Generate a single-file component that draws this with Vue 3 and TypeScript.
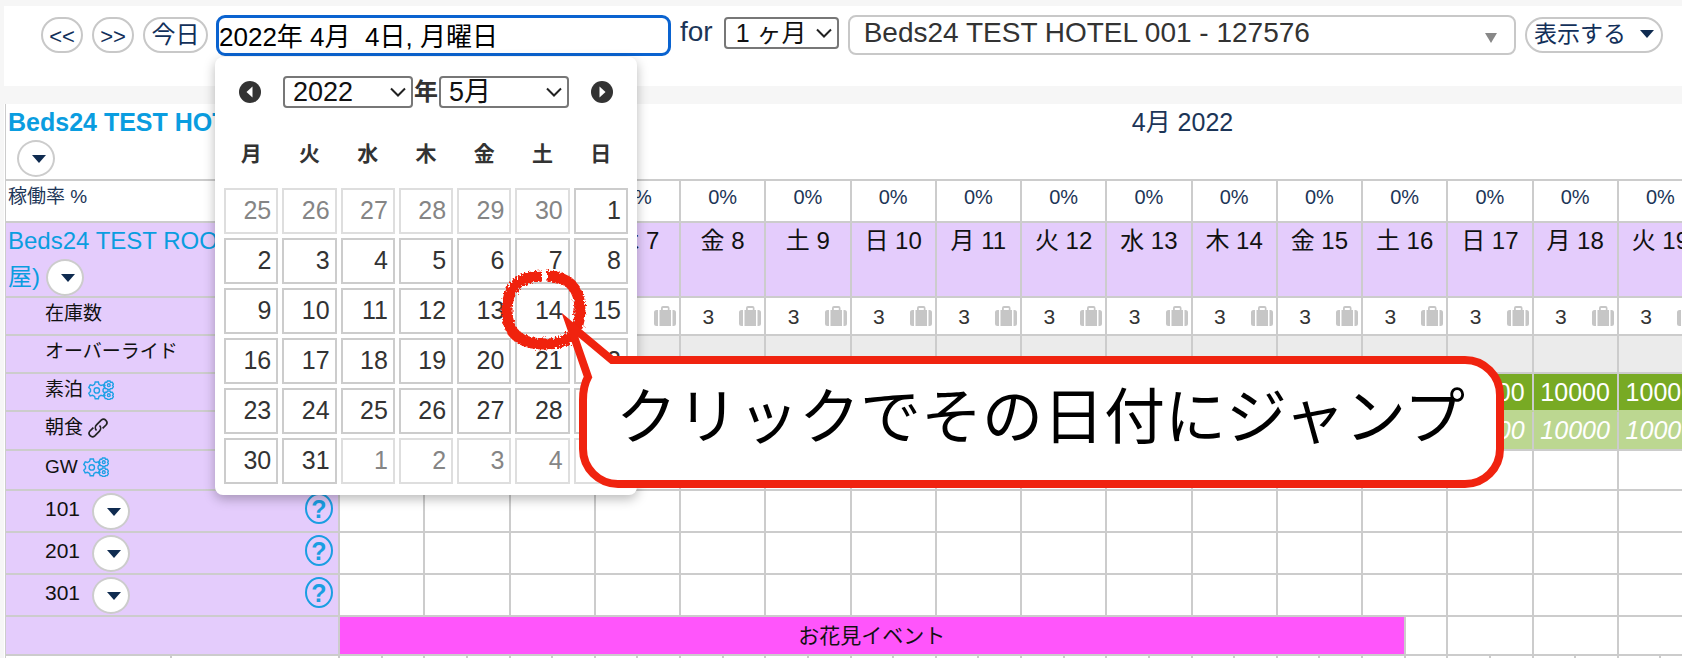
<script setup lang="ts">
import { ref } from 'vue'

type RowIcon = 'gears' | 'link' | null

const dateText = ref('2022年 4月  4日, 月曜日')

const days: string[] = [
  '月 4', '火 5', '水 6', '木 7', '金 8', '土 9', '日 10', '月 11',
  '火 12', '水 13', '木 14', '金 15', '土 16', '日 17', '月 18', '火 19',
]

const rateRows: { label: string; icon: RowIcon; cls: string; price: string }[] = [
  { label: 'オーバーライド', icon: null, cls: 'override', price: '' },
  { label: '素泊', icon: 'gears', cls: 'price', price: '10000' },
  { label: '朝食', icon: 'link', cls: 'price linked', price: '10000' },
  { label: 'GW', icon: 'gears', cls: 'empty', price: '' },
]

const rooms: string[] = ['101', '201', '301']

const weekdays: string[] = ['月', '火', '水', '木', '金', '土', '日']
const firstShown = new Date(2022, 3, 25)
const weeks = Array.from({ length: 6 }, (_, w) =>
  Array.from({ length: 7 }, (_, d) => {
    const date = new Date(firstShown)
    date.setDate(firstShown.getDate() + w * 7 + d)
    return { day: date.getDate(), other: date.getMonth() !== 4 }
  }),
)
</script>

<template>
  <div class="page">
    <header class="toolbar">
      <button class="pill nav" type="button">&lt;&lt;</button>
      <button class="pill nav" type="button">&gt;&gt;</button>
      <button class="pill today" type="button">今日</button>
      <input v-model="dateText" class="date" type="text" aria-label="日付" />
      <label class="for" for="span">for</label>
      <span class="select span">
        <select id="span"><option>1 ヶ月</option></select>
        <svg class="chev" viewBox="0 0 16 10" aria-hidden="true"><path d="M1 1.5l7 7 7-7" /></svg>
      </span>
      <span class="select hotel">
        <select aria-label="施設"><option>Beds24 TEST HOTEL 001 - 127576</option></select>
        <svg class="solid" viewBox="0 0 12 10" aria-hidden="true"><path d="M0 0h12L6 10z" /></svg>
      </span>
      <button class="pill view" type="button">
        表示する
        <svg class="caret" viewBox="0 0 14 8" aria-hidden="true"><path d="M0 0h14L7 8z" /></svg>
      </button>
    </header>

    <main class="board">
      <table class="grid">
        <colgroup>
          <col class="c-left" />
          <col class="c-left2" />
          <col v-for="n in 32" :key="n" />
        </colgroup>
        <tbody>
          <tr class="r-month">
            <th colspan="2">
              <a class="hotel-link" href="#">Beds24 TEST HOTEL 001</a>
              <button class="round" type="button" aria-label="施設メニュー">
                <svg class="caret" viewBox="0 0 14 8"><path d="M0 0h14L7 8z" /></svg>
              </button>
            </th>
            <td class="month" colspan="32">4月 2022</td>
          </tr>
          <tr class="r-rate">
            <th colspan="2">稼働率 %</th>
            <td v-for="d in days" :key="d" colspan="2">0%</td>
          </tr>
          <tr class="r-days lilac">
            <th colspan="2">
              <a class="room-link" href="#">Beds24 TEST ROOM 01 (3部屋)</a>
              <button class="round" type="button" aria-label="部屋メニュー">
                <svg class="caret" viewBox="0 0 14 8"><path d="M0 0h14L7 8z" /></svg>
              </button>
            </th>
            <td v-for="d in days" :key="d" colspan="2">{{ d }}</td>
          </tr>
          <tr class="r-line">
            <th class="sub" colspan="2">在庫数</th>
            <td v-for="d in days" :key="d" colspan="2">
              <div class="stock">
                <span>3</span>
                <svg class="case" viewBox="0 0 22 20" aria-hidden="true">
                  <path d="M2.5 4H4v16H2.500Q0 20 0 17.500V6.500Q0 4 2.500 4zM18.500 4h1Q22 4 22 6.500v11q0 2.500-2.500 2.500h-1zM5.500 4H7V2Q7 0 9 0h4.500q2 0 2 2v2H17v16H5.500zM8.800 4h5V2h-5z" fill-rule="evenodd" />
                </svg>
              </div>
            </td>
          </tr>
          <tr v-for="row in rateRows" :key="row.label" class="r-line" :class="row.cls">
            <th class="sub" colspan="2">
              {{ row.label }}
              <svg v-if="row.icon === 'gears'" class="gears" viewBox="0 0 26 20" aria-hidden="true">
                <path d="M7.200 2h3.200l.6 2.400 2 1.100 2.400-.6 1.400 2.700-1.700 1.700v2.200l1.700 1.700-1.400 2.700-2.400-.6-2 1.100-.6 2.400H7.200l-.6-2.400-2-1.100-2.400.6L.8 13.200l1.700-1.700V9.300L.8 7.600l1.400-2.700 2.400.6 2-1.100z" />
                <circle cx="8.800" cy="10.400" r="2.700" />
                <path d="M19.500 1h2.500l.6 1.200h1.600l1.200 2-.8 1.200.8 1.200-1.200 2h-1.600L22 9.400h-2.500l-.7-.8h-1.500l-1.100-2 .8-1.200-.8-1.200 1.100-2h1.500z" />
                <circle cx="20.800" cy="5.200" r="1.400" />
                <path d="M19.500 11h2.500l.6 1.200h1.600l1.200 2-.8 1.200.8 1.200-1.200 2h-1.600l-.6.8h-2.500l-.7-.8h-1.500l-1.100-2 .8-1.200-.8-1.200 1.100-2h1.500z" />
                <circle cx="20.800" cy="15.200" r="1.400" />
              </svg>
              <svg v-if="row.icon === 'link'" class="link" viewBox="0 0 20 20" aria-hidden="true">
                <path d="M8.500 12.500a4 4 0 0 1 0-5.600l4.700-4.700a3.400 3.400 0 0 1 4.800 4.800l-3.400 3.400" />
                <path d="M11.500 7.500a4 4 0 0 1 0 5.600l-4.700 4.700A3.400 3.400 0 0 1 2 13l3.400-3.400" />
              </svg>
            </th>
            <td v-for="d in days" :key="d" colspan="2">{{ row.price }}</td>
          </tr>
          <tr v-for="room in rooms" :key="room" class="r-room">
            <th class="sub" colspan="2">
              <div class="room">
                <span>{{ room }}</span>
                <button class="round" type="button" :aria-label="room + ' メニュー'">
                  <svg class="caret" viewBox="0 0 14 8"><path d="M0 0h14L7 8z" /></svg>
                </button>
                <a class="help" href="#">?</a>
              </div>
            </th>
            <td v-for="d in days" :key="d" colspan="2"></td>
          </tr>
          <tr class="r-event">
            <th class="sub" colspan="2"></th>
            <td class="event" colspan="25">お花見イベント</td>
            <td></td>
            <td colspan="2"></td>
            <td colspan="2"></td>
            <td colspan="2"></td>
          </tr>
          <tr class="r-half">
            <td v-for="n in 34" :key="n"></td>
          </tr>
        </tbody>
      </table>
    </main>

    <section class="picker" aria-label="カレンダー">
      <div class="picker-head">
        <button class="arrow" type="button" aria-label="前の月">
          <svg viewBox="0 0 22 22"><circle cx="11" cy="11" r="11" /><path d="M13.500 5.500v11L7.500 11z" /></svg>
        </button>
        <div class="ym">
          <span class="select">
            <select aria-label="年"><option>2022</option></select>
            <svg class="chev" viewBox="0 0 16 10" aria-hidden="true"><path d="M1 1.500l7 7 7-7" /></svg>
          </span>
          <b>年</b>
          <span class="select">
            <select aria-label="月"><option>5月</option></select>
            <svg class="chev" viewBox="0 0 16 10" aria-hidden="true"><path d="M1 1.500l7 7 7-7" /></svg>
          </span>
        </div>
        <button class="arrow" type="button" aria-label="次の月">
          <svg viewBox="0 0 22 22"><circle cx="11" cy="11" r="11" /><path d="M8.500 5.500v11l6-5.500z" /></svg>
        </button>
      </div>
      <table class="cal">
        <thead>
          <tr><th v-for="w in weekdays" :key="w">{{ w }}</th></tr>
        </thead>
        <tbody>
          <tr v-for="(week, i) in weeks" :key="i">
            <td v-for="(c, j) in week" :key="j">
              <a href="#" :class="{ other: c.other }">{{ c.day }}</a>
            </td>
          </tr>
        </tbody>
      </table>
    </section>

    <svg class="ring" viewBox="0 0 100 100" aria-hidden="true">
      <defs>
        <filter id="chalk" x="-10%" y="-10%" width="120%" height="120%">
          <feTurbulence type="fractalNoise" baseFrequency="0.45" numOctaves="2" seed="4" />
          <feDisplacementMap in="SourceGraphic" scale="7" />
        </filter>
      </defs>
      <path filter="url(#chalk)" d="M54 16C76 16 87 29 87 50C87 73 76 84 52 84C27 84 14 74 14 50C14 28 26 16 49 16" />
    </svg>

    <aside class="callout">
      <svg viewBox="0 0 944 178" aria-hidden="true">
        <path d="M52 50H905A35 35 0 0 1 940 85V139A35 35 0 0 1 905 174H58A35 35 0 0 1 23 139V90Q23 76 28 67L10 15z" />
      </svg>
      <p>クリックでその日付にジャンプ</p>
    </aside>
  </div>
</template>

<style>
body {
  margin: 0;
  overflow: hidden;
  background: #f6f6f6;
}
</style>

<style scoped>
.page {
  position: relative;
  height: 100vh;
  overflow: hidden;
  box-sizing: border-box;
  padding: 6px 0 0 4px;
  font-family: "Liberation Sans", "Noto Sans CJK JP", sans-serif;
  color: #1c3557;
}
.page * {
  box-sizing: border-box;
}
button,
select,
input {
  font-family: inherit;
  margin: 0;
}
a {
  text-decoration: none;
}

/* toolbar */
.toolbar {
  display: flex;
  align-items: flex-start;
  height: 80px;
  padding: 9px 19px 0 37px;
  background: #fff;
}
.pill {
  height: 36px;
  margin-top: 2px;
  padding: 0;
  border: 2px solid #c8c8c8;
  border-radius: 18px;
  background: #fff;
  color: #12305a;
  font-size: 24px;
  line-height: 30px;
}
.nav {
  width: 42px;
  margin-right: 9px;
  padding-top: 3px;
  font-size: 22px;
  line-height: 28px;
}
.today {
  width: 65px;
  margin-right: 8px;
}
.date {
  width: 455px;
  height: 41px;
  padding: 0 0 3px;
  border: 3px solid #0a63d0;
  border-radius: 9px;
  outline: none;
  background: #fff;
  color: #000;
  font-size: 26px;
}
.for {
  margin: 0 11px 0 9px;
  font-size: 28px;
  line-height: 34px;
}
.select {
  position: relative;
  display: block;
}
.select select {
  display: block;
  width: 100%;
  height: 32px;
  padding: 0 8px;
  appearance: none;
  border: 2px solid #777;
  border-radius: 4px;
  background: #fff;
  color: #111;
  font-size: 27px;
  line-height: 28px;
}
.chev {
  position: absolute;
  top: 11px;
  right: 7px;
  width: 16px;
  height: 10px;
  fill: none;
  stroke: #222;
  stroke-width: 2;
  pointer-events: none;
}
.span {
  width: 115px;
  margin-top: 2px;
  margin-right: 9px;
}
.span select {
  padding-left: 10px;
  font-size: 25px;
}
.hotel {
  flex: 1;
  margin-right: 9px;
}
.hotel select {
  height: 40px;
  padding: 0 14px 4px;
  border-color: #c8c8c8;
  border-radius: 8px;
  color: #333;
  font-size: 28px;
}
.solid {
  position: absolute;
  top: 18px;
  right: 19px;
  width: 12px;
  height: 10px;
  fill: #888;
  pointer-events: none;
}
.caret {
  width: 14px;
  height: 8px;
  fill: #0f2b50;
}
.view {
  display: flex;
  align-items: center;
  justify-content: space-between;
  width: 138px;
  padding: 0 7px 2px 7px;
  font-size: 23px;
}

/* board */
.board {
  margin-top: 18px;
  overflow: hidden;
  background: #fff;
}
.grid {
  width: calc(100% + 21px);
  margin-left: 1px;
  table-layout: fixed;
  border-spacing: 0;
  border-left: 1px solid #ccc;
  font-size: 20px;
}
.c-left {
  width: 166px;
}
.c-left2 {
  width: 168px;
}
.grid th,
.grid td {
  padding: 0;
  border-right: 2px solid #ccc;
  border-bottom: 2px solid #ccc;
  vertical-align: top;
  text-align: center;
  font-weight: 400;
  line-height: 32px;
}
.grid th {
  padding-left: 2px;
  text-align: left;
  font-size: 19px;
}
.grid .sub {
  padding-left: 39px;
  background: #e4ccfc;
  color: #111;
}
.r-month {
  height: 77px;
}
.r-month th {
  border-right: 0;
}
.grid .month {
  padding-left: 323px;
  font-size: 25px;
  line-height: 36px;
}
.grid .hotel-link,
.grid .room-link {
  color: #0a9de0;
  font-size: 24px;
  line-height: 36px;
}
.grid .hotel-link {
  display: block;
  font-size: 25px;
  font-weight: 700;
}
.r-rate {
  height: 42px;
}
.round {
  display: inline-flex;
  align-items: center;
  justify-content: center;
  width: 38px;
  height: 37px;
  padding: 0 0 0 5px;
  border: 2px solid #ccc;
  border-radius: 50%;
  background: #fff;
  vertical-align: top;
}
.r-month .round {
  margin-left: 9px;
}
.r-days {
  height: 75px;
}
.r-days .round {
  margin-left: 6px;
}
.r-days th,
.r-days td {
  background: #e4ccfc;
}
.grid .r-days td {
  color: #111;
  font-size: 24px;
  line-height: 36px;
}
.r-line {
  height: 38px;
}
.stock {
  display: flex;
  align-items: center;
  justify-content: flex-end;
  gap: 25px;
  height: 36px;
  padding-right: 3px;
  color: #333;
  font-size: 21px;
}
.stock span {
  padding-top: 1px;
}
.case {
  width: 22px;
  height: 20px;
  fill: #c6c6c6;
}
.override td {
  background: #ebebeb;
}
.grid .price td {
  background: #78aa24;
  color: #fff;
  font-size: 25px;
  line-height: 36px;
  border-bottom-color: #bcd791;
}
.linked {
  height: 39px;
}
.grid .linked td {
  background: #bcd791;
  font-style: italic;
  border-bottom-color: #ccc;
}
.empty {
  height: 40px;
}
.gears {
  width: 26px;
  height: 20px;
  fill: none;
  stroke: #1ea0e6;
  stroke-width: 1.4;
  vertical-align: -4px;
}
.link {
  width: 20px;
  height: 20px;
  fill: none;
  stroke: #222;
  stroke-width: 1.7;
  vertical-align: -4px;
}
.r-room {
  height: 42px;
}
.room {
  display: flex;
  align-items: flex-start;
  height: 40px;
  padding: 2px 5px 0 0;
  font-size: 21px;
}
.room .round {
  margin-left: 12px;
}
.help {
  width: 28px;
  height: 31px;
  margin-left: auto;
  border: 2px solid #1a9ee2;
  border-radius: 50%;
  color: #1a9ee2;
  font-size: 25px;
  font-weight: 700;
  line-height: 28px;
  text-align: center;
}
.r-event {
  height: 39px;
}
.grid .event {
  background: #ff55fb;
  color: #111;
  font-size: 21px;
  line-height: 37px;
}
.r-half {
  height: 40px;
}

/* date picker */
.picker {
  position: absolute;
  top: 57px;
  left: 215px;
  width: 422px;
  padding: 19px 5px 7px;
  border-radius: 8px;
  background: #fff;
  box-shadow: 0 4px 12px rgba(0, 0, 0, 0.28);
  color: #333;
}
.picker-head {
  display: flex;
  align-items: center;
  justify-content: space-between;
  padding: 0 19px;
}
.arrow {
  width: 22px;
  height: 22px;
  padding: 0;
  border: 0;
  background: none;
}
.arrow svg {
  display: block;
  width: 22px;
  height: 22px;
}
.arrow circle {
  fill: #333;
}
.arrow path {
  fill: #fff;
}
.ym {
  display: flex;
  align-items: center;
}
.ym .select {
  width: 130px;
}
.ym b {
  width: 26px;
  font-size: 24px;
  line-height: 32px;
  text-align: center;
}
.cal {
  width: 100%;
  margin-top: 10px;
  table-layout: fixed;
  border-spacing: 4px;
}
.cal th {
  height: 62px;
  padding: 0 0 3px;
  font-size: 21px;
  font-weight: 700;
}
.cal td {
  padding: 0;
}
.cal a {
  display: block;
  height: 46px;
  padding-right: 5px;
  border: 2px solid #ccc;
  color: #333;
  font-size: 25px;
  line-height: 41px;
  text-align: right;
}
.cal .other {
  border-color: #dedede;
  color: #858585;
}

/* annotation */
.ring {
  position: absolute;
  top: 260px;
  left: 493px;
  width: 100px;
  height: 100px;
  fill: none;
  stroke: #f0230f;
  stroke-width: 11;
  overflow: visible;
}
.callout {
  position: absolute;
  top: 310px;
  left: 560px;
  width: 944px;
  height: 178px;
}
.callout svg {
  position: absolute;
  inset: 0;
  fill: #fff;
  stroke: #f0230f;
  stroke-width: 8;
}
.callout p {
  position: relative;
  margin: 0;
  padding: 61px 0 0 56px;
  color: #000;
  font-family: "Noto Sans CJK JP", sans-serif;
  font-size: 61px;
  line-height: 84px;
  white-space: nowrap;
}
</style>
